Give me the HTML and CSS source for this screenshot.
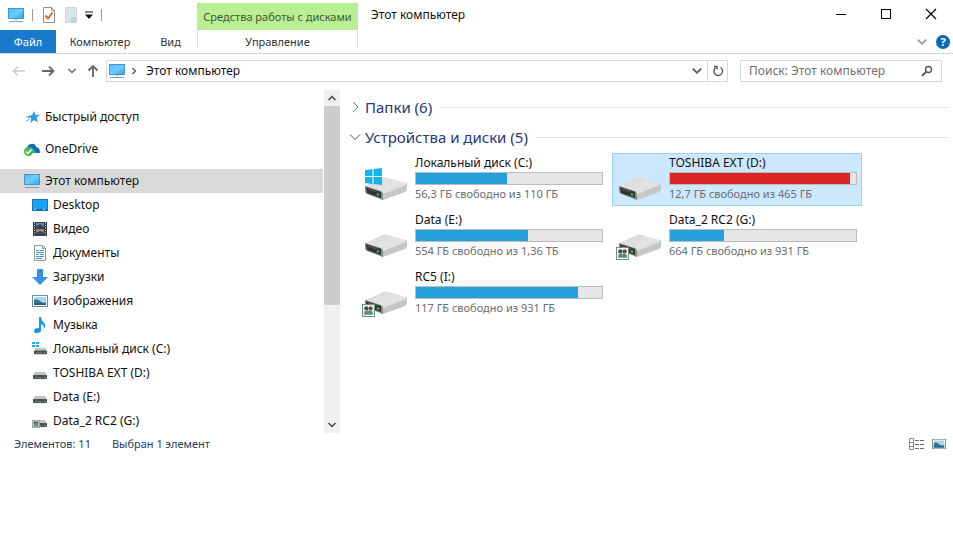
FILE: index.html
```html
<!DOCTYPE html>
<html lang="ru">
<head>
    <meta charset="UTF-8">
    <meta name="viewport" content="width=device-width, initial-scale=1.0">
    <title>Этот компьютер</title>
    <link rel="stylesheet" href="styles.css">
</head>
<body>
    <!-- Shared icons -->
    <svg class="sprite" aria-hidden="true">
        <defs>
            <linearGradient id="screen" x1="0" y1="0" x2="1" y2="1">
                <stop offset="0" stop-color="#4dbdf8"/>
                <stop offset="0.5" stop-color="#6fcdfb"/>
                <stop offset="1" stop-color="#2b9fe8"/>
            </linearGradient>
            <linearGradient id="metal" x1="0" y1="0" x2="1" y2="1">
                <stop offset="0" stop-color="#d6d6d6"/>
                <stop offset="1" stop-color="#ececec"/>
            </linearGradient>
        </defs>
        <symbol id="pc" viewBox="0 0 16 16">
            <rect x="0.5" y="1.5" width="15" height="10" fill="url(#screen)" stroke="#4a93c4"/>
            <path d="M6 12h4v1H6z" fill="#b9d3e2"/>
            <path d="M1 14.5h14" stroke="#7d9fb5"/>
        </symbol>
        <symbol id="drive" viewBox="0 0 44 26">
            <path d="M1 11L19 3Q21 2 24 3L42 8L18 17Z" fill="url(#metal)"/>
            <path d="M17 17L42 8Q43 8 43 9V14Q43 16 41 17L19 25H17Z" fill="#c6c6c6"/>
            <path d="M17 17L42 8V10L19 19Z" fill="#e2e2e2"/>
            <path d="M1 11L17 16Q19 17 19 19V25L3 19Q1 18 1 16Z" fill="#8a8c8a"/>
            <path d="M2 12L17 17V23L3 18Z" fill="#303332"/>
            <path d="M4 14L13 17" stroke="#59605a"/>
            <path d="M13 19l2 1" stroke="#4fbb5c" stroke-width="2"/>
        </symbol>
        <symbol id="winlogo" viewBox="0 0 16 16">
            <path d="M0 2L7 1V7.5H0ZM8 1L16 0V7.5H8ZM0 8.5H7V15L0 14ZM8 8.5H16V16L8 15Z" fill="#0fb5ee"/>
        </symbol>
        <symbol id="small-drive" viewBox="0 0 16 16">
            <path d="M3 6h10l2 4H1z" fill="#c3c5c5"/>
            <rect x="1" y="9" width="14" height="4" rx="1" fill="#4b5150"/>
            <path d="M3 11.5h7" stroke="#79807d"/>
            <path d="M12 11.5h2" stroke="#55b46a"/>
        </symbol>
        <symbol id="people" viewBox="0 0 12 12">
            <rect x="0.5" y="0.5" width="11" height="11" fill="#fff" stroke="#6d9089"/>
            <circle cx="4" cy="4" r="2" fill="#40524d"/>
            <circle cx="8" cy="4" r="2" fill="#6b4c3f"/>
            <path d="M2 10V8Q2 6 4 6H8Q10 6 10 8V10Z" fill="#5b8d80"/>
        </symbol>
        <symbol id="picture" viewBox="0 0 16 12">
            <rect x="0.5" y="0.5" width="15" height="11" fill="#fff" stroke="#738895"/>
            <rect x="2" y="2" width="12" height="8" fill="#a8d8f1"/>
            <path d="M2 5Q5 3 8 6T14 7V10H2Z" fill="#397785"/>
            <path d="M2 8.5Q8 7 14 9V10H2Z" fill="#275f91"/>
        </symbol>
        <symbol id="down" viewBox="0 0 10 10">
            <path d="M1.5 3L5 6.5L8.5 3" fill="none" stroke="currentColor" stroke-width="1.5"/>
        </symbol>
    </svg>

    <div class="window">
        <header class="header">
            <!-- Title bar -->
            <div class="titlebar">
                <div class="quick-tools">
                    <svg class="icon" viewBox="0 0 16 16"><use href="#pc"/></svg>
                    <span class="divider"></span>
                    <button aria-label="Свойства">
                        <svg class="icon" viewBox="0 0 16 16"><path d="M2.5 0.5h8l3 3v12h-11z" fill="#fff" stroke="#8c9299"/><path d="M10.5 0.5v3h3" fill="none" stroke="#8c9299"/><path d="M4.5 8.5l2.5 3 4.5-6" fill="none" stroke="#d36a35" stroke-width="2"/></svg>
                    </button>
                    <button aria-label="Новая папка">
                        <svg class="icon" viewBox="0 0 16 16"><path d="M2.5 0.5h11v15h-11z" fill="#d9e4ea" stroke="#cbd6dc"/><path d="M8 10h5v5H8z" fill="#c6d3da"/></svg>
                    </button>
                    <button class="customize" aria-label="Настройка панели">
                        <svg viewBox="0 0 8 8" width="8" height="8"><path d="M0 1h8" stroke="#111"/><path d="M0 3.5h8L4 8z" fill="#111"/></svg>
                    </button>
                    <span class="divider"></span>
                </div>
                <div class="tool-group">Средства работы с дисками</div>
                <h1>Этот компьютер</h1>
                <div class="window-buttons">
                    <button aria-label="Свернуть"><svg viewBox="0 0 12 12"><path d="M1 6.5h10" stroke="#000"/></svg></button>
                    <button aria-label="Развернуть"><svg viewBox="0 0 12 12"><rect x="1.5" y="1.5" width="9" height="9" fill="none" stroke="#000"/></svg></button>
                    <button aria-label="Закрыть"><svg viewBox="0 0 12 12"><path d="M1 1l10 10M11 1L1 11" stroke="#000" stroke-width="1.2"/></svg></button>
                </div>
            </div>

            <!-- Ribbon tabs -->
            <nav class="tabs">
                <button class="file">Файл</button>
                <button class="computer">Компьютер</button>
                <button class="view">Вид</button>
                <button class="manage">Управление</button>
                <div class="ribbon-tools">
                    <button class="expand" aria-label="Развернуть ленту"><svg viewBox="0 0 10 10" width="12" height="12"><use href="#down"/></svg></button>
                    <button class="help" aria-label="Справка">?</button>
                </div>
            </nav>
        </header>

        <!-- Address bar -->
        <div class="navigation">
            <div class="history">
                <button class="back" aria-label="Назад"><svg viewBox="0 0 14 14"><path d="M13 7H2M6 2.5L1.5 7L6 11.5" fill="none" stroke="currentColor" stroke-width="1.5"/></svg></button>
                <button aria-label="Вперед"><svg viewBox="0 0 14 14"><path d="M1 7h11M8 2.5L12.5 7L8 11.5" fill="none" stroke="currentColor" stroke-width="1.8"/></svg></button>
                <button class="recent" aria-label="Последние расположения"><svg viewBox="0 0 10 10"><use href="#down"/></svg></button>
                <button aria-label="Вверх"><svg viewBox="0 0 14 14"><path d="M7 13V2M2.5 6.5L7 2l4.5 4.5" fill="none" stroke="currentColor" stroke-width="1.8"/></svg></button>
            </div>
            <div class="address">
                <svg class="icon" viewBox="0 0 16 16"><use href="#pc"/></svg>
                <svg class="crumb-arrow" viewBox="0 0 8 8"><path d="M2.5 1L5.5 4L2.5 7" fill="none" stroke="#555" stroke-width="1.3"/></svg>
                <a href="#">Этот компьютер</a>
                <button class="drop" aria-label="Предыдущие расположения"><svg viewBox="0 0 10 10" width="12" height="12"><use href="#down"/></svg></button>
                <button class="refresh" aria-label="Обновить"><svg viewBox="0 0 12 12" width="12" height="12"><path d="M8.5 2.5A4.3 4.3 0 1 1 3.5 2.8" fill="none" stroke="#555" stroke-width="1.4"/><path d="M2 1.5h3v3" fill="none" stroke="#555" stroke-width="1.4"/></svg></button>
            </div>
            <form class="search">
                <input type="text" aria-label="Поиск" placeholder="Поиск: Этот компьютер">
                <button type="button" aria-label="Найти"><svg viewBox="0 0 12 12" width="12" height="12"><circle cx="7.5" cy="4.5" r="3" fill="none" stroke="#555" stroke-width="1.4"/><path d="M5.3 6.7L1 11" stroke="#555" stroke-width="1.8"/></svg></button>
            </form>
        </div>

        <div class="explorer">
            <!-- Folder tree -->
            <aside class="sidebar">
                <nav class="tree">
                    <a href="#" class="root">
                        <svg class="icon" viewBox="0 0 16 16"><path d="M10 2l1.5 4 4.5-.2-3.5 3 1.5 4.7-4-2.5-3.5 3 .8-4.5L3 7l5-.8z" fill="#2e9ae0"/><path d="M2 12l4-2M2 8l4 .5" stroke="#5fb0e5"/></svg>
                        Быстрый доступ
                    </a>
                    <a href="#" class="root">
                        <svg class="icon" viewBox="0 0 16 16"><path d="M3 10Q2 4 7 3Q11 2 12 6Q16 6 16 12H6Z" fill="#1168b5"/><path d="M5 7Q9 5 12 12H6Z" fill="#3b9ee0"/><circle cx="4.5" cy="10.5" r="4.5" fill="#4bb84d"/><path d="M2 10.5l2 2 3.5-4" fill="none" stroke="#fff" stroke-width="1.5"/></svg>
                        OneDrive
                    </a>
                    <a href="#" class="root current">
                        <svg class="icon" viewBox="0 0 16 16"><use href="#pc"/></svg>
                        Этот компьютер
                    </a>
                    <a href="#">
                        <svg class="icon" viewBox="0 0 16 16"><rect x="0.5" y="2.5" width="15" height="11" fill="#18a3f2" stroke="#1876b8"/><path d="M1 12.5h14" stroke="#1b65a2"/><path d="M2 12.5h2M11 12.5h2" stroke="#a1dcff"/></svg>
                        Desktop
                    </a>
                    <a href="#">
                        <svg class="icon" viewBox="0 0 16 16"><rect x="1" y="1" width="14" height="14" fill="#3a3b42"/><path d="M4 2h8v6H4z" fill="#6987b6"/><path d="M4 8h8v6H4z" fill="#a08855"/><path d="M4 5l4-2 4 3v2H4zM4 12l4-2 4 2v2H4z" fill="#334468"/><path d="M2.5 1.5v13M13.5 1.5v13" stroke="#ddd" stroke-dasharray="1 1.5"/></svg>
                        Видео
                    </a>
                    <a href="#">
                        <svg class="icon" viewBox="0 0 16 16"><path d="M2.5 0.5h8l3 3v12h-11z" fill="#fff" stroke="#8799a3"/><path d="M10.5 0.5v3h3" fill="none" stroke="#8799a3"/><path d="M4 5.5h3M8 5.5h4M4 7.5h8M4 9.5h3M8 9.5h4M4 11.5h8M4 13.5h6" stroke="#4799b9"/></svg>
                        Документы
                    </a>
                    <a href="#">
                        <svg class="icon" viewBox="0 0 16 16"><path d="M5 0h6v8h5l-8 8-8-8h5z" fill="#388ee0"/></svg>
                        Загрузки
                    </a>
                    <a href="#">
                        <svg class="icon" viewBox="0 0 16 16"><use href="#picture" y="2" width="16" height="12"/></svg>
                        Изображения
                    </a>
                    <a href="#">
                        <svg class="icon" viewBox="0 0 16 16"><path d="M7 0h2q0 3 2.5 5t1 6l-1 1q1-4-2.5-5v6q0 3-4 3-3 0-3-2 0-3 5-3z" fill="#1697df"/></svg>
                        Музыка
                    </a>
                    <a href="#">
                        <svg class="icon" viewBox="0 0 16 16"><use href="#small-drive" x="1" y="1" width="15" height="15"/><path d="M0 1h3v2H0zM4 1h3v2H4zM0 4h3v2H0zM4 4h3v2H4z" fill="#1caee8"/></svg>
                        Локальный диск (C:)
                    </a>
                    <a href="#">
                        <svg class="icon" viewBox="0 0 16 16"><use href="#small-drive" y="1" width="16" height="16"/></svg>
                        TOSHIBA EXT (D:)
                    </a>
                    <a href="#">
                        <svg class="icon" viewBox="0 0 16 16"><use href="#small-drive" y="1" width="16" height="16"/></svg>
                        Data (E:)
                    </a>
                    <a href="#">
                        <svg class="icon" viewBox="0 0 16 16"><use href="#small-drive" y="1" width="16" height="16"/><use href="#people" y="7" width="8" height="8"/></svg>
                        Data_2 RC2 (G:)
                    </a>
                </nav>
                <div class="scrollbar">
                    <button class="up" aria-label="Прокрутить вверх"><svg viewBox="0 0 10 10"><use href="#down"/></svg></button>
                    <div class="thumb"></div>
                    <button aria-label="Прокрутить вниз"><svg viewBox="0 0 10 10"><use href="#down"/></svg></button>
                </div>
            </aside>

            <!-- Folders and drives -->
            <main class="content">
                <h2><svg viewBox="0 0 12 12"><path d="M4 1L9 6L4 11" fill="none" stroke="#777"/></svg>Папки (6)</h2>
                <h2><svg viewBox="0 0 12 12"><path d="M1 3.5L6 8.5L11 3.5" fill="none" stroke="#555"/></svg>Устройства и диски (5)</h2>
                <div class="drives">
                    <div class="drive">
                        <svg class="drive-icon" viewBox="0 0 46 38"><use href="#drive" x="0" y="9" width="44" height="26"/><use href="#winlogo" x="1" y="2" width="17" height="17"/></svg>
                        <div class="drive-info">
                            <h3>Локальный диск (C:)</h3>
                            <div class="bar"><div class="used" style="width: 49%"></div></div>
                            <p>56,3 ГБ свободно из 110 ГБ</p>
                        </div>
                    </div>
                    <div class="drive selected">
                        <svg class="drive-icon" viewBox="0 0 46 38"><use href="#drive" x="0" y="9" width="44" height="26"/></svg>
                        <div class="drive-info">
                            <h3>TOSHIBA EXT (D:)</h3>
                            <div class="bar"><div class="used full" style="width: 97%"></div></div>
                            <p>12,7 ГБ свободно из 465 ГБ</p>
                        </div>
                    </div>
                    <div class="drive">
                        <svg class="drive-icon" viewBox="0 0 46 38"><use href="#drive" x="0" y="9" width="44" height="26"/></svg>
                        <div class="drive-info">
                            <h3>Data (E:)</h3>
                            <div class="bar"><div class="used" style="width: 60%"></div></div>
                            <p>554 ГБ свободно из 1,36 ТБ</p>
                        </div>
                    </div>
                    <div class="drive">
                        <svg class="drive-icon" viewBox="0 0 46 38"><use href="#drive" x="0" y="9" width="44" height="26"/><use href="#people" x="-2" y="24" width="13" height="13"/></svg>
                        <div class="drive-info">
                            <h3>Data_2 RC2 (G:)</h3>
                            <div class="bar"><div class="used" style="width: 29%"></div></div>
                            <p>664 ГБ свободно из 931 ГБ</p>
                        </div>
                    </div>
                    <div class="drive">
                        <svg class="drive-icon" viewBox="0 0 46 38"><use href="#drive" x="0" y="9" width="44" height="26"/><use href="#people" x="-2" y="24" width="13" height="13"/></svg>
                        <div class="drive-info">
                            <h3>RC5 (I:)</h3>
                            <div class="bar"><div class="used" style="width: 87%"></div></div>
                            <p>117 ГБ свободно из 931 ГБ</p>
                        </div>
                    </div>
                </div>
            </main>
        </div>

        <!-- Status bar -->
        <footer class="status">
            <span>Элементов: 11</span>
            <span>Выбран 1 элемент</span>
            <div class="view-buttons">
                <button aria-label="Таблица"><svg viewBox="0 0 16 12" width="16" height="12"><path d="M0.5 0.5h4v11h-4zM0.5 4.5h4M0.5 8.5h4" fill="none" stroke="#888"/><path d="M6 2.5h4M11 2.5h4M6 6.5h4M11 6.5h4M6 10.5h4M11 10.5h4" stroke="#666"/></svg></button>
                <button aria-label="Крупные значки"><svg viewBox="0 0 16 12" width="14" height="12"><use href="#picture"/></svg></button>
            </div>
        </footer>
    </div>
</body>
</html>
```
FILE: styles.css
```css
/* Page */
* {
    box-sizing: border-box;
}

body {
    margin: 0;
    background: #fff;
    color: #111;
    font-family: "Noto Sans", sans-serif;
    font-size: 12px;
    line-height: 16px;
}

button {
    display: flex;
    align-items: center;
    justify-content: center;
    padding: 0;
    border: 0;
    background: none;
    color: inherit;
    font: inherit;
}

a {
    color: inherit;
    text-decoration: none;
}

h1, h2, h3, p {
    margin: 0;
    font-weight: normal;
}

svg {
    display: block;
    flex: none;
}

.sprite {
    position: absolute;
    width: 0;
    height: 0;
}

.icon {
    width: 16px;
    height: 16px;
}

/* Title bar */
.titlebar {
    display: flex;
    height: 30px;
}

.quick-tools {
    display: flex;
    align-items: center;
    gap: 8px;
    width: 197px;
    padding-left: 8px;
}

.quick-tools button + button {
    margin-left: -2px;
}

.divider {
    width: 1px;
    height: 12px;
    background: #999;
}

.customize {
    width: 8px;
    height: 16px;
}

.tool-group {
    width: 161px;
    margin-top: 3px;
    padding-top: 6px;
    background: #b9ee94;
    color: #3c5a32;
    font-size: 11px;
    text-align: center;
    white-space: nowrap;
}

.titlebar h1 {
    padding: 7px 0 0 13px;
    font-size: 12px;
}

.window-buttons {
    display: flex;
    margin-left: auto;
}

.window-buttons button {
    width: 45px;
    height: 28px;
}

.window-buttons svg {
    width: 12px;
    height: 12px;
}

/* Ribbon tabs */
.tabs {
    display: flex;
    height: 24px;
    border-bottom: 1px solid #d5d5d5;
    color: #333;
    font-size: 11px;
}

.file {
    width: 56px;
    background: #1979ca;
    color: #fff;
}

.computer {
    width: 88px;
}

.view {
    width: 53px;
}

.manage {
    width: 161px;
    height: 18px;
    padding-top: 6px;
    border: solid #ddd;
    border-width: 0 1px;
}

.ribbon-tools {
    display: flex;
    align-items: center;
    gap: 8px;
    margin-left: auto;
    padding-right: 3px;
}

.expand {
    color: #999;
}

.help {
    width: 14px;
    height: 14px;
    border-radius: 50%;
    background: #0c68b7;
    color: #fff;
    font-size: 11px;
    font-weight: bold;
}

/* Address bar */
.navigation {
    display: flex;
    height: 36px;
    padding: 6px 11px 8px 12px;
}

.history {
    display: flex;
    align-items: center;
    gap: 15px;
    width: 94px;
    color: #666;
}

.history svg {
    width: 14px;
    height: 14px;
}

.history .back {
    color: #ccc;
}

.history .recent svg {
    width: 10px;
    height: 10px;
}

.history .recent {
    margin: 0 -6px 0 -3px;
}

.address {
    display: flex;
    flex: 1;
    align-items: center;
    border: 1px solid #d9d9d9;
    padding-left: 2px;
}

.crumb-arrow {
    width: 8px;
    height: 8px;
    margin: 0 8px 0 5px;
}

.address .drop {
    width: 20px;
    height: 20px;
    margin-left: auto;
    color: #555;
}

.address .refresh {
    width: 20px;
    height: 20px;
    border-left: 1px solid #d9d9d9;
}

.search {
    display: flex;
    width: 202px;
    margin-left: 12px;
    border: 1px solid #d9d9d9;
}

.search input {
    flex: 1;
    min-width: 0;
    padding: 0 0 0 8px;
    border: 0;
    outline: 0;
    background: none;
    color: #666;
    font: inherit;
}

.search input::placeholder {
    color: #707070;
    opacity: 1;
}

.search button {
    width: 28px;
}

/* Folder tree */
.explorer {
    display: flex;
}

.sidebar {
    display: flex;
    width: 36%;
    max-width: 340px;
}

.tree {
    flex: 1;
    padding-top: 15px;
}

.tree a {
    display: flex;
    align-items: center;
    gap: 5px;
    height: 24px;
    padding-left: 32px;
    white-space: nowrap;
}

.tree .root {
    padding-left: 24px;
    margin-bottom: 8px;
}

.tree .current {
    margin-bottom: 0;
    background: #d9d9d9;
}

.scrollbar {
    display: flex;
    flex-direction: column;
    width: 16px;
    margin-left: 1px;
    background: #f0f0f0;
    color: #444;
}

.scrollbar button {
    height: 16px;
}

.scrollbar button:last-child {
    margin-top: auto;
}

.scrollbar svg {
    width: 10px;
    height: 10px;
}

.scrollbar .up svg {
    transform: rotate(180deg);
}

.thumb {
    height: 58%;
    background: #cdcdcd;
}

/* Content */
.content {
    flex: 1;
    min-width: 0;
    padding: 2px 5px 0 9px;
}

.content h2 {
    display: flex;
    align-items: center;
    height: 30px;
    color: #263778;
    font-size: 15px;
}

.content h2 svg {
    width: 12px;
    height: 12px;
    margin-right: 4px;
}

.content h2::after {
    content: "";
    flex: 1;
    height: 1px;
    margin-left: 8px;
    background: #e3e3e3;
}

.drives {
    display: grid;
    grid-template-columns: repeat(auto-fill, 250px);
    gap: 4px;
    padding: 1px 0 0 9px;
}

.drive {
    display: flex;
    height: 53px;
    padding: 1px 4px 1px 5px;
    border: 1px solid transparent;
}

.drive.selected {
    border-color: #99d1ff;
    background: #cce8ff;
}

.drive-icon {
    width: 46px;
    height: 38px;
    margin-top: 11px;
    overflow: visible;
}

.drive-info {
    width: 188px;
    margin-left: 5px;
}

.drive h3 {
    font-size: 12px;
}

.drive p {
    color: #6d6d6d;
    font-size: 11px;
    white-space: nowrap;
}

/* Used space bar */
.bar {
    height: 13px;
    margin: 1px 0;
    border: 1px solid #bcbcbc;
    background: #e6e6e6;
}

.used {
    height: 100%;
    background: #26a0da;
}

.used.full {
    background: #da2626;
}

/* Status bar */
.status {
    display: flex;
    align-items: center;
    gap: 21px;
    height: 22px;
    padding: 0 7px 0 14px;
    color: #27405f;
    font-size: 11px;
}

.view-buttons {
    display: flex;
    gap: 7px;
    margin-left: auto;
}
```
